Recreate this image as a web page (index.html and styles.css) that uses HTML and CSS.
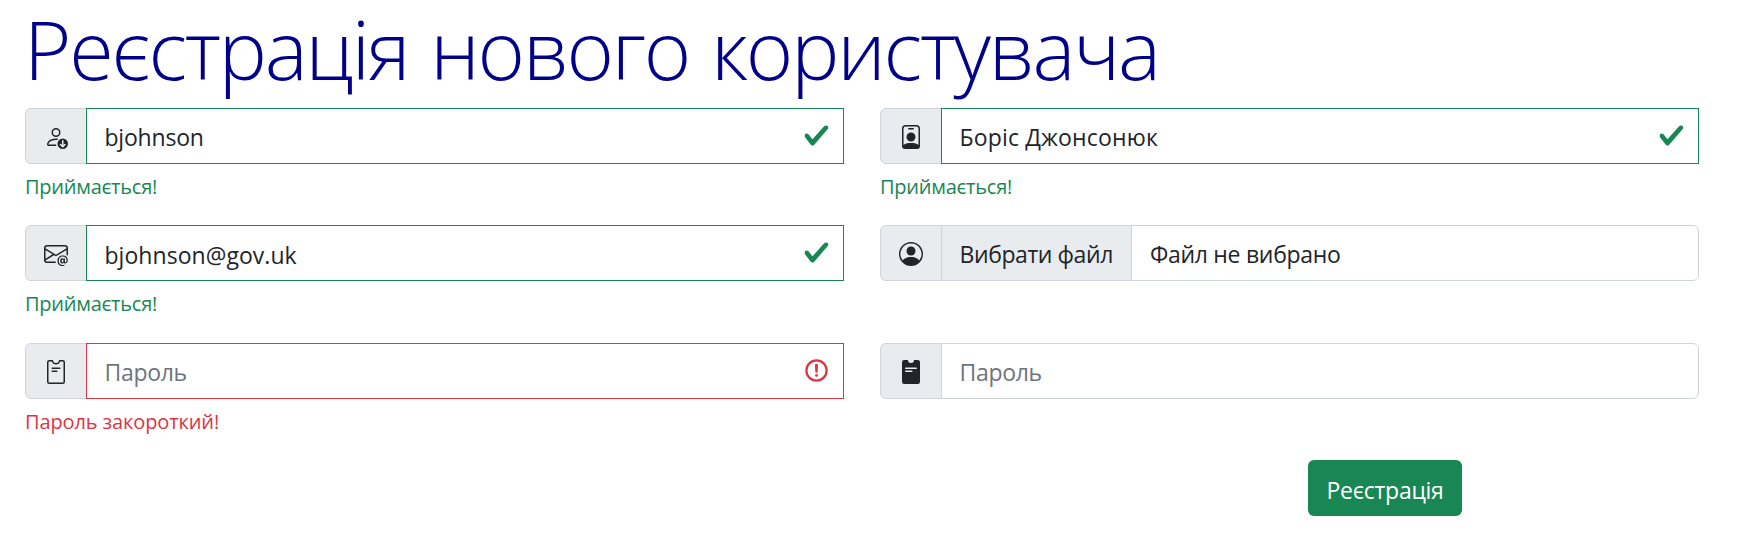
FILE: index.html
```html
<!DOCTYPE html>
<html lang="uk">
<head>
<meta charset="utf-8">
<title>Реєстрація нового користувача</title>
<link rel="stylesheet" href="styles.css">
</head>
<body>
<main class="page">
  <h1 class="title"><span class="title-text">Реєстрація нового користувача</span></h1>
  <form class="form">
    <div class="field">
      <div class="group">
        <span class="addon"><svg class="icon" viewBox="0 0 16 16"><path d="M12.500 9a3.500 3.500 0 1 1 0 7 3.500 3.500 0 0 1 0-7Zm.354 5.854 1.500-1.500a.5.5 0 0 0-.708-.708l-.646.647V10.500a.5.5 0 0 0-1 0v2.793l-.646-.647a.5.5 0 0 0-.708.708l1.500 1.500a.5.5 0 0 0 .708 0ZM11 5a3 3 0 1 1-6 0 3 3 0 0 1 6 0ZM8 7a2 2 0 1 0 0-4 2 2 0 0 0 0 4Z"/><path d="M8.256 14a4.474 4.474 0 0 1-.229-1.004H3c.001-.246.154-.986.832-1.664C4.484 10.680 5.711 10 8 10c.26 0 .507.009.74.025.226-.341.496-.65.804-.918C9.077 9.038 8.564 9 8 9c-5 0-6 3-6 4s1 1 1 1h5.256Z"/></svg></span>
        <input class="control valid login" type="text" value="bjohnson">
        <svg class="mark ok" viewBox="0 0 8 8"><path d="M2.3 6.73.6 4.53c-.4-1.04.46-1.4 1.1-.8l1.1 1.4 3.4-3.8c.6-.63 1.600-.27 1.200.7l-4 4.600c-.43.5-.8.4-1.100.1z"/></svg>
      </div>
      <div class="feedback ok-text">Приймається!</div>
    </div>
    <div class="field">
      <div class="group">
        <span class="addon"><svg class="icon" viewBox="0 0 16 16"><path d="M6.500 2a.5.5 0 0 0 0 1h3a.5.5 0 0 0 0-1h-3zM11 8a3 3 0 1 1-6 0 3 3 0 0 1 6 0z"/><path d="M4.500 0A2.500 2.500 0 0 0 2 2.500V14a2 2 0 0 0 2 2h8a2 2 0 0 0 2-2V2.500A2.500 2.500 0 0 0 11.500 0h-7zM3 2.500A1.500 1.500 0 0 1 4.500 1h7A1.500 1.500 0 0 1 13 2.500v10.795a4.200 4.200 0 0 0-.776-.492C11.392 12.387 10.063 12 8 12s-3.392.387-4.224.803a4.200 4.200 0 0 0-.776.492V2.500z"/></svg></span>
        <input class="control valid name" type="text" value="Боріс Джонсонюк">
        <svg class="mark ok" viewBox="0 0 8 8"><path d="M2.3 6.73.6 4.53c-.4-1.04.46-1.4 1.1-.8l1.1 1.4 3.4-3.8c.6-.63 1.600-.27 1.200.7l-4 4.600c-.43.5-.8.4-1.100.1z"/></svg>
      </div>
      <div class="feedback ok-text">Приймається!</div>
    </div>
    <div class="field">
      <div class="group">
        <span class="addon"><svg class="icon" viewBox="0 0 16 16"><path d="M2 2a2 2 0 0 0-2 2v8.010A2 2 0 0 0 2 14h5.500a.5.5 0 0 0 0-1H2a1 1 0 0 1-.966-.741l5.640-3.471L8 9.583l7-4.200V8.500a.5.5 0 0 0 1 0V4a2 2 0 0 0-2-2H2Zm3.708 6.208L1 11.105V5.383l4.708 2.825ZM1 4.217V4a1 1 0 0 1 1-1h12a1 1 0 0 1 1 1v.217l-7 4.200-7-4.200Z"/><path d="M14.247 14.269c1.010 0 1.587-.857 1.587-2.025v-.21C15.834 10.430 14.640 9 12.520 9h-.035C10.420 9 9 10.360 9 12.432v.214C9 14.820 10.438 16 12.358 16h.044c.594 0 1.018-.074 1.237-.175v-.73c-.245.11-.673.18-1.180.18h-.044c-1.334 0-2.571-.788-2.571-2.655v-.157c0-1.657 1.058-2.724 2.640-2.724h.04c1.535 0 2.484 1.050 2.484 2.326v.118c0 .975-.324 1.390-.639 1.390-.232 0-.41-.148-.41-.42v-2.190h-.906v.569h-.03c-.084-.298-.368-.63-.954-.63-.778 0-1.259.555-1.259 1.400v.528c0 .892.49 1.434 1.260 1.434.471 0 .896-.227 1.014-.643h.043c.118.42.617.648 1.120.648Zm-2.453-1.588v-.227c0-.546.227-.791.573-.791.297 0 .572.192.572.708v.367c0 .573-.253.744-.564.744-.354 0-.581-.215-.581-.8Z"/></svg></span>
        <input class="control valid email" type="text" value="bjohnson@gov.uk">
        <svg class="mark ok" viewBox="0 0 8 8"><path d="M2.3 6.73.6 4.53c-.4-1.04.46-1.4 1.1-.8l1.1 1.4 3.4-3.8c.6-.63 1.600-.27 1.200.7l-4 4.600c-.43.5-.8.4-1.100.1z"/></svg>
      </div>
      <div class="feedback ok-text">Приймається!</div>
    </div>
    <div class="field">
      <div class="group">
        <span class="addon"><svg class="icon" viewBox="0 0 16 16"><path d="M11 6a3 3 0 1 1-6 0 3 3 0 0 1 6 0z"/><path fill-rule="evenodd" d="M0 8a8 8 0 1 1 16 0A8 8 0 0 1 0 8zm8-7a7 7 0 0 0-5.468 11.370C3.242 11.226 4.805 10 8 10s4.757 1.225 5.468 2.370A7 7 0 0 0 8 1z"/></svg></span>
        <label class="file">
          <span class="file-button"><span class="file-action">Вибрати файл</span></span>
          <span class="file-name">Файл не вибрано</span>
        </label>
      </div>
    </div>
    <div class="field">
      <div class="group">
        <span class="addon"><svg class="icon" viewBox="0 0 16 16"><path d="M5.500 5a.5.5 0 0 0 0 1h5a.5.5 0 0 0 0-1h-5Zm0 2a.5.5 0 0 0 0 1h3a.5.5 0 0 0 0-1h-3Z"/><path d="M8 2a2 2 0 0 0 2-2h2.500A1.500 1.500 0 0 1 14 1.500v13a1.500 1.500 0 0 1-1.500 1.500h-9A1.500 1.500 0 0 1 2 14.500v-13A1.500 1.500 0 0 1 3.500 0H6a2 2 0 0 0 2 2Zm0 1a3.001 3.001 0 0 1-2.830-2H3.500a.5.5 0 0 0-.5.5v13a.5.5 0 0 0 .5.5h9a.5.5 0 0 0 .5-.5v-13a.5.5 0 0 0-.5-.5h-1.670A3.001 3.001 0 0 1 8 3Z"/></svg></span>
        <input class="control invalid password" type="password" placeholder="Пароль">
        <svg class="mark bad" viewBox="0 0 12 12"><circle class="ring" cx="6" cy="6" r="4.500"/><path class="stem" d="M5.800 3.600h.4L6 6.500z"/><circle class="dot" cx="6" cy="8.200" r=".6"/></svg>
      </div>
      <div class="feedback bad-text">Пароль закороткий!</div>
    </div>
    <div class="field">
      <div class="group">
        <span class="addon"><svg class="icon" viewBox="0 0 16 16"><path fill-rule="evenodd" d="M10 0a2 2 0 1 1-4 0H3.500A1.500 1.500 0 0 0 2 1.500v13A1.500 1.500 0 0 0 3.500 16h9a1.500 1.500 0 0 0 1.500-1.500v-13A1.500 1.500 0 0 0 12.500 0H10ZM4.500 5h7a.5.5 0 0 1 0 1h-7a.5.5 0 0 1 0-1Zm0 2h4a.5.5 0 0 1 0 1h-4a.5.5 0 0 1 0-1Z"/></svg></span>
        <input class="control password" type="password" placeholder="Пароль">
      </div>
    </div>
    <button class="submit" type="button">Реєстрація</button>
  </form>
</main>
</body>
</html>
```
FILE: styles.css
```css
* { box-sizing: border-box; }
body {
  margin: 0;
  background: #fff;
  color: #212529;
  font-family: "Open Sans", "Noto Sans", sans-serif;
  font-size: 23px;
  line-height: 36px;
}
.page { padding: 0 46px 0 25px; }
.title {
  height: 107.7px;
  margin: 0 0 0 -1px;
  color: #00008b;
  font-size: 81px;
  font-weight: 300;
  line-height: 98px;
  white-space: nowrap;
}
.title-text { letter-spacing: -2.2px; word-spacing: 3px; }
.form {
  display: grid;
  grid-template-columns: 819px 819px;
  grid-auto-rows: 117.5px;
  column-gap: 36px;
}
.group { position: relative; display: flex; height: 56px; }
.addon {
  display: flex;
  align-items: center;
  justify-content: center;
  width: 62px;
  margin-right: -1px;
  padding-top: 2px;
  background: #e9ecef;
  border: 1px solid #ced4da;
  border-radius: 6px 0 0 6px;
}
.icon { width: 24px; height: 24px; fill: #212529; }
.control {
  position: relative;
  flex: 1;
  min-width: 0;
  margin: 0;
  padding: 3px 17.5px 0;
  background: #fff;
  border: 1px solid #ced4da;
  border-radius: 0 6px 6px 0;
  color: #212529;
  font: inherit;
  outline: none;
}
.control::placeholder { color: #6c757d; opacity: 1; }
.valid { border-color: #198754; border-radius: 0; }
.invalid { border-color: #dc3545; border-radius: 0; }
.login { letter-spacing: -0.2px; }
.name { letter-spacing: 0.15px; }
.email { letter-spacing: 0.05px; }
.password { letter-spacing: -0.3px; }
.mark { position: absolute; top: 14px; right: 14px; width: 27px; height: 27px; }
.ok { fill: #198754; }
.ring, .stem { fill: none; stroke: #dc3545; }
.stem { stroke-linejoin: round; }
.dot { fill: #dc3545; }
.feedback { margin-top: 7px; font-size: 20px; line-height: 32px; }
.ok-text { color: #198754; letter-spacing: -0.25px; }
.bad-text { color: #dc3545; letter-spacing: -0.12px; }
.file {
  display: flex;
  flex: 1;
  border: 1px solid #ced4da;
  border-radius: 0 6px 6px 0;
  line-height: 57px;
  white-space: nowrap;
}
.file-button {
  width: 190px;
  padding-left: 17.5px;
  background: #e9ecef;
  border-right: 1px solid #ced4da;
  letter-spacing: -0.42px;
}
.file-name { padding-left: 18px; letter-spacing: -0.3px; }
.submit {
  grid-column: 2;
  width: 154px;
  height: 56px;
  margin: 0 0 0 428px;
  padding: 3px 0 0;
  background: #198754;
  border: 0;
  border-radius: 6px;
  color: #fff;
  font: inherit;
  letter-spacing: -0.25px;
}
```
